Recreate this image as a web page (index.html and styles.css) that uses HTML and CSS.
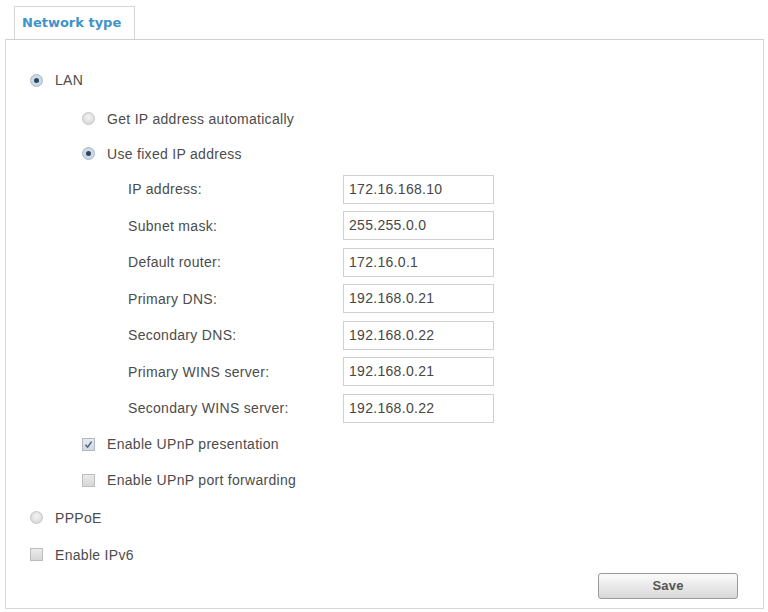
FILE: index.html
```html
<!DOCTYPE html>
<html>
<head>
<meta charset="utf-8">
<link rel="stylesheet" href="styles.css">
</head>
<body>
<div class="page">
  <div class="tab">Network type</div>
  <div class="panel">
    <div class="row top gap-after"><span class="radio on"></span><span class="lbl">LAN</span></div>
    <div class="row sub"><span class="radio"></span><span class="lbl">Get IP address automatically</span></div>
    <div class="row sub"><span class="radio on"></span><span class="lbl">Use fixed IP address</span></div>
    <div class="field"><span class="flabel">IP address:</span><span class="input">172.16.168.10</span></div>
    <div class="field"><span class="flabel">Subnet mask:</span><span class="input">255.255.0.0</span></div>
    <div class="field"><span class="flabel">Default router:</span><span class="input">172.16.0.1</span></div>
    <div class="field"><span class="flabel">Primary DNS:</span><span class="input">192.168.0.21</span></div>
    <div class="field"><span class="flabel">Secondary DNS:</span><span class="input">192.168.0.22</span></div>
    <div class="field"><span class="flabel">Primary WINS server:</span><span class="input">192.168.0.21</span></div>
    <div class="field"><span class="flabel">Secondary WINS server:</span><span class="input">192.168.0.22</span></div>
    <div class="row sub"><span class="check on"><svg viewBox="0 0 13 13" width="13" height="13"><path d="M3.5 6.8 L5.6 9.2 L9.6 3.6" fill="none" stroke="#4a5a78" stroke-width="1.4"/></svg></span><span class="lbl">Enable UPnP presentation</span></div>
    <div class="row sub h37"><span class="check"></span><span class="lbl">Enable UPnP port forwarding</span></div>
    <div class="row top h38"><span class="radio"></span><span class="lbl">PPPoE</span></div>
    <div class="row top"><span class="check"></span><span class="lbl">Enable IPv6</span></div>
    <div class="actions"><span class="btn">Save</span></div>
  </div>
</div>
</body>
</html>
```
FILE: styles.css
```css
html, body {
  margin: 0;
  padding: 0;
  background: #ffffff;
}
body {
  font-family: "Liberation Sans", Arial, sans-serif;
  font-size: 14px;
  letter-spacing: 0.3px;
  color: #4c4c4c;
}
.page {
  padding-top: 6px;
}
.tab {
  margin-left: 14px;
  width: 121px;
  height: 33px;
  box-sizing: border-box;
  border: 1px solid #d6d6d6;
  border-bottom: none;
  color: #3f93c8;
  font-family: "DejaVu Sans", Verdana, sans-serif;
  font-weight: bold;
  font-size: 13px;
  letter-spacing: 0;
  line-height: 32px;
  padding-left: 7px;
}
.panel {
  margin-left: 5px;
  margin-right: 4px;
  border: 1px solid #d8d8d8;
  border-top-color: #d0d0d0;
  height: 570px;
  box-sizing: border-box;
  padding-top: 22px;
}
.row {
  display: flex;
  align-items: center;
  height: 36px;
}
.row.top {
  padding-left: 24px;
}
.row.sub {
  padding-left: 76px;
  height: 35px;
}
.row.h37 {
  height: 37px;
}
.row.h38 {
  height: 38px;
}
.row.gap-after {
  margin-bottom: 3px;
}
.lbl {
  margin-left: 12px;
}
.radio {
  width: 13px;
  height: 13px;
  border-radius: 50%;
  box-sizing: border-box;
  border: 1px solid #c4c4c4;
  background: radial-gradient(circle at 50% 40%, #f4f4f4 0%, #dcdcdc 70%, #cfcfcf 100%);
  display: flex;
  align-items: center;
  justify-content: center;
  flex: none;
}
.radio.on {
  border-color: #a9b8c8;
  background: radial-gradient(circle at 50% 50%, #d6e2ec 0%, #c2d2e0 100%);
}
.radio.on::after {
  content: "";
  width: 5px;
  height: 5px;
  border-radius: 50%;
  background: #2c4660;
}
.check {
  width: 13px;
  height: 13px;
  box-sizing: border-box;
  border: 1px solid #bdbdbd;
  background: linear-gradient(#eaeaea, #d6d6d6);
  flex: none;
  display: flex;
}
.check.on {
  border-color: #b0b8c4;
  background: linear-gradient(#e6eaf0, #d2d8e0);
}
.check svg {
  margin: -1px;
}
.field {
  display: flex;
  align-items: center;
  height: 36.5px;
  padding-left: 122px;
}
.flabel {
  width: 215px;
}
.input {
  width: 151px;
  height: 29px;
  box-sizing: border-box;
  border: 1px solid #d0d0d0;
  padding-left: 5px;
  line-height: 27px;
  color: #474747;
}
.actions {
  display: flex;
  justify-content: flex-end;
  padding-right: 25px;
}
.btn {
  width: 140px;
  height: 26px;
  box-sizing: border-box;
  border: 1px solid #9a9a9a;
  border-radius: 3px;
  background: linear-gradient(#fbfbfb, #e6e6e6 60%, #d8d8d8);
  text-align: center;
  line-height: 24px;
  font-weight: bold;
  color: #555;
  font-size: 13px;
  letter-spacing: 0.2px;
}
```
